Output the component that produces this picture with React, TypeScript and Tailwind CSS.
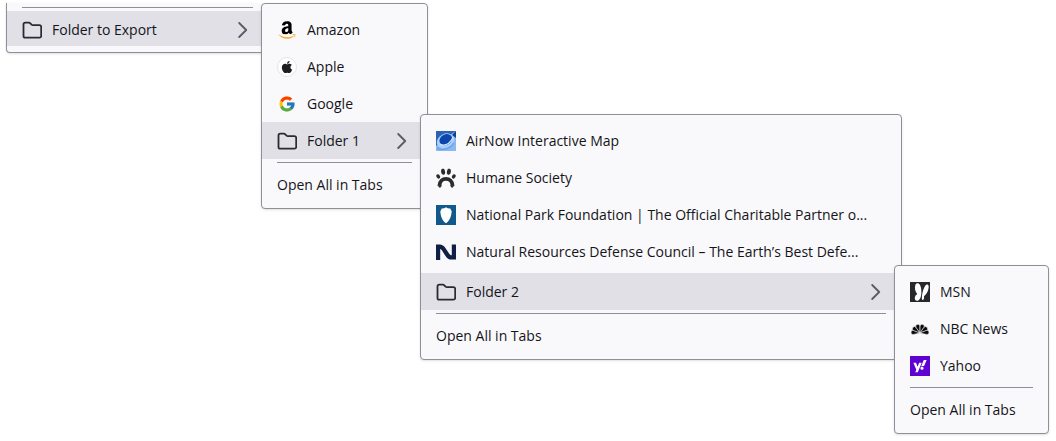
import type { ReactNode } from "react";
import { FaAmazon, FaApple, FaYahoo } from "react-icons/fa";
import { FcGoogle } from "react-icons/fc";

const FolderIcon = () => (
  <svg viewBox="0 0 20 20" className="size-5" fill="none" stroke="#2b2a33" strokeWidth="1.8" strokeLinejoin="round">
    <path d="M3.300 2.700h3.600c.6 0 1 .2 1.400.6l1.300 1.400c.3.300.7.500 1.200.5H17.400c1 0 1.800.8 1.800 1.800v8.900c0 1-.8 1.800-1.800 1.800H3.300c-1 0-1.800-.8-1.800-1.800V4.500c0-1 .8-1.800 1.800-1.800z" />
  </svg>
);

const ChevronIcon = () => (
  <svg viewBox="0 0 10 16" className="h-4 w-[10px]" fill="none" stroke="#5b5b66" strokeWidth="1.8">
    <path d="M1.200 1l7 7-7 7" strokeLinecap="round" strokeLinejoin="round" />
  </svg>
);

const AmazonIcon = () => (
  <>
    <svg className="absolute size-0" aria-hidden="true">
      <linearGradient id="amazon" gradientUnits="userSpaceOnUse" x1="0" y1="0" x2="0" y2="512">
        <stop offset="0.72" stopColor="#000" />
        <stop offset="0.72" stopColor="#f5a623" />
      </linearGradient>
    </svg>
    <FaAmazon className="size-5" fill="url(#amazon)" />
  </>
);

const AppleIcon = () => (
  <span className="flex size-5 items-center justify-center rounded-full border border-[#e4e4e8] bg-white">
    <FaApple className="size-[14px] text-[#1d1d1f]" />
  </span>
);

const GoogleIcon = () => <FcGoogle className="size-[18px]" />;

const AirNowIcon = () => (
  <svg viewBox="0 0 20 20" className="size-5">
    <rect width="20" height="20" fill="#8ab8f2" />
    <path d="M0 0h20L12 5 3 12l-3 3z" fill="#2c62b4" />
    <path d="M20 0v7l-4-3z" fill="#123f96" />
    <ellipse cx="9.500" cy="10" rx="9" ry="7.200" fill="#a9d0fb" transform="rotate(-28 9.500 10)" />
    <ellipse cx="9.800" cy="8.600" rx="6.600" ry="5.200" fill="#0b45ad" transform="rotate(-28 9.800 8.600)" />
    <path d="M4 13.500c5 1.500 10-1 13-7" stroke="#d5e8ff" strokeWidth="1.200" fill="none" />
    <path d="M1 17c4 2.500 12 2 17-5" stroke="#6fa4ea" strokeWidth="1.500" fill="none" />
  </svg>
);

const PawIcon = () => (
  <svg viewBox="0 0 20 20" className="size-5" fill="#2b2a2c">
    <ellipse cx="2.200" cy="8.400" rx="1.700" ry="2.300" transform="rotate(-30 2.200 8.400)" />
    <ellipse cx="7.100" cy="3.700" rx="2" ry="3.100" transform="rotate(-8 7.100 3.700)" />
    <ellipse cx="12.900" cy="3.700" rx="2" ry="3.100" transform="rotate(8 12.900 3.700)" />
    <ellipse cx="17.800" cy="8.400" rx="1.700" ry="2.300" transform="rotate(30 17.800 8.400)" />
    <path d="M3.400 17.800c.2-4.700 3.200-7 6.600-7s6.400 2.300 6.600 7" fill="none" stroke="#2b2a2c" strokeWidth="3.800" />
    <path d="M1.500 17.500L4 20l2-2.500zM14 17.500l2 2.500 2.500-2.500z" />
  </svg>
);

const ShieldIcon = () => (
  <svg viewBox="0 0 20 20" className="size-5">
    <rect width="20" height="20" fill="#10598a" />
    <path
      d="M10 2.200c1.200.9 2.600 1.300 4.400 1.200.1 1 .6 1.900 1.300 2.600-.3 3.500-.9 9-5.700 12.200-4.800-3.200-5.400-8.700-5.700-12.200.7-.7 1.200-1.600 1.300-2.600 1.800.1 3.200-.3 4.400-1.200z"
      fill="#fff"
    />
  </svg>
);

const NrdcIcon = () => (
  <svg viewBox="0 0 20 20" className="size-5" fill="none" stroke="#101f45" strokeWidth="4.200">
    <path d="M2.100 18V5.500M17.900 15.500V2.500" />
    <path d="M0 4.600h3.700c2 0 2.900.9 4.100 2.700l3.300 5.200c1.200 1.900 2.300 2.900 4.300 2.900H20" />
  </svg>
);

const MsnIcon = () => (
  <svg viewBox="0 0 20 20" className="size-5">
    <rect width="20" height="20" fill="#26282b" />
    <g fill="#fff">
      <path d="M5.300 3.200C6 .8 8.700.600 10 3c1.300 2.300 1.600 5.800 1.300 8.800-.2 3-1.400 6.500-3.600 7-2.200.4-3.300-1.400-2.800-3.500.3-1.500 1.200-2.400 2.400-3.200C5.300 10 4.400 6.100 5.300 3.200z" />
      <path d="M17.600 2.600c1.700.8 1.200 4.300 0 7-1 2.300-2.200 3.800-3.600 4.600.3 1.700 0 3.400-1.100 3.900-.9.200-1.200-1.200-1-3 .3-4.400 2.600-13.600 5.700-12.500z" />
    </g>
  </svg>
);

const feathers = [-85, -52, -18, 18, 52, 85];

const NbcIcon = () => (
  <svg viewBox="0 0 20 20" className="size-5" fill="#0c0c0d">
    {feathers.map((angle) => (
      <path
        key={angle}
        d="M10 14L8 7.500a2.050 2.050 0 1 1 4 0z"
        transform={`rotate(${angle} 10 14)`}
        stroke="#f9f9fb"
        strokeWidth="0.5"
      />
    ))}
  </svg>
);

const YahooIcon = () => (
  <span className="flex size-5 items-center justify-center bg-[#5f01d1]">
    <FaYahoo className="size-[14px] text-white" />
  </span>
);

const Separator = () => <li role="separator" className="mx-[15px] my-[3px] h-px bg-[#8f8f9a]" />;

type MenuProps = { className: string; children: ReactNode };

const Menu = ({ className, children }: MenuProps) => (
  <ul className={`rounded border border-[#8f8f98] bg-[#f9f9fb] pt-[7px] pb-[5px] shadow-sm ${className}`}>
    {children}
  </ul>
);

type ItemProps = { label: string; icon?: ReactNode };

const Item = ({ label, icon }: ItemProps) => (
  <li>
    <button type="button" className="flex h-[37px] w-full items-center gap-[10px] px-[15px] text-left hover:bg-[#e0e0e6]">
      {icon && <span className="flex size-5 shrink-0 items-center justify-center">{icon}</span>}
      <span className="whitespace-nowrap">{label}</span>
    </button>
  </li>
);

type FolderProps = { label: string; className?: string; children: ReactNode };

// an opened folder: highlighted row with its submenu overlapping the right edge
const Folder = ({ label, className = "h-[37px]", children }: FolderProps) => (
  <li className="relative">
    <button
      type="button"
      aria-haspopup="menu"
      aria-expanded="true"
      className={`flex w-full items-center gap-[10px] bg-[#e0e0e6] pr-5 pl-[15px] text-left ${className}`}
    >
      <FolderIcon />
      <span className="grow whitespace-nowrap">{label}</span>
      <ChevronIcon />
    </button>
    {children}
  </li>
);

const submenu = "absolute -top-2 left-full -ml-[7px]";

const App = () => {
  return (
    <main className="min-h-screen bg-white pt-[3px] pl-[6px] font-['Open_Sans','Noto_Sans',sans-serif] text-sm text-[#15141a]">
      <ul className="w-[263px] rounded-b border border-t-0 border-[#8f8f98] bg-[#f9f9fb] pt-px pb-[6px] shadow-sm">
        <Separator />
        <Folder label="Folder to Export" className="h-[35px] pt-[2px]">
          <Menu className={`${submenu} w-[167px]`}>
            <Item label="Amazon" icon={<AmazonIcon />} />
            <Item label="Apple" icon={<AppleIcon />} />
            <Item label="Google" icon={<GoogleIcon />} />
            <Folder label="Folder 1">
              <Menu className={`${submenu} w-[482px]`}>
                <Item label="AirNow Interactive Map" icon={<AirNowIcon />} />
                <Item label="Humane Society" icon={<PawIcon />} />
                <Item
                  label="National Park Foundation | The Official Charitable Partner o..."
                  icon={<ShieldIcon />}
                />
                <Item
                  label="Natural Resources Defense Council – The Earth’s Best Defe..."
                  icon={<NrdcIcon />}
                />
                <li aria-hidden="true" className="h-[3px]" />
                <Folder label="Folder 2">
                  <Menu className={`${submenu} w-[155px]`}>
                    <Item label="MSN" icon={<MsnIcon />} />
                    <Item label="NBC News" icon={<NbcIcon />} />
                    <Item label="Yahoo" icon={<YahooIcon />} />
                    <Separator />
                    <Item label="Open All in Tabs" />
                  </Menu>
                </Folder>
                <Separator />
                <Item label="Open All in Tabs" />
              </Menu>
            </Folder>
            <Separator />
            <Item label="Open All in Tabs" />
          </Menu>
        </Folder>
      </ul>
    </main>
  );
};

export default App;
